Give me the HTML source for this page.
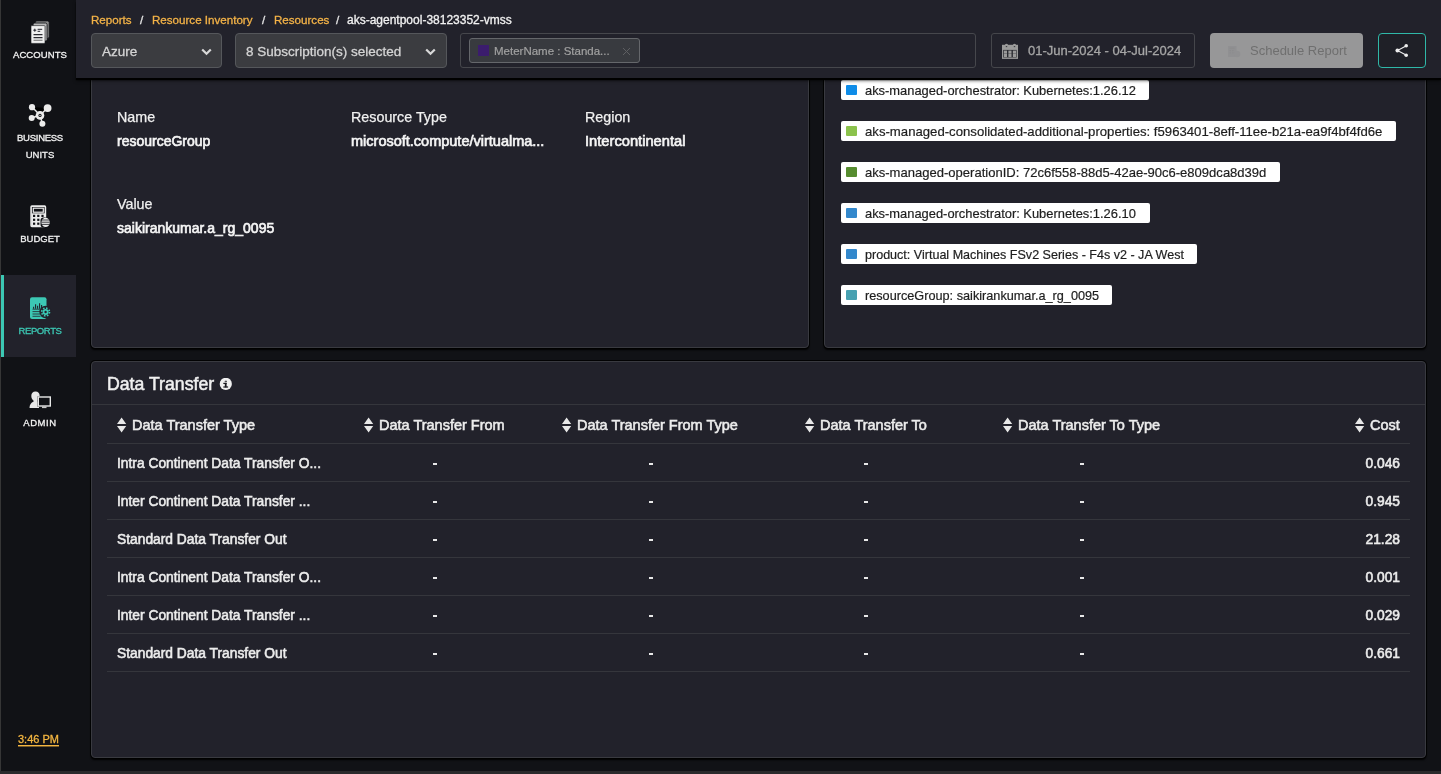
<!DOCTYPE html>
<html><head><meta charset="utf-8">
<style>
*{box-sizing:border-box;margin:0;padding:0}
html,body{width:1441px;height:774px;overflow:hidden;background:#111216;font-family:"Liberation Sans",sans-serif;color:#f0f0f0}
.abs{position:absolute}
#lb{left:0;top:0;width:1px;height:774px;background:#363636}
#bb{left:0;top:771px;width:1441px;height:3px;background:#2a2a2c}
#side{left:1px;top:0;width:75px;height:771px;background:#111216}
.nav{position:absolute;left:2px;width:76px;text-align:center;font-size:9.5px;-webkit-text-stroke:0.3px;color:#f2f2f2;line-height:1}
.card{position:absolute;background:#22222b;border:1px solid #393a40;border-radius:4px;box-shadow:0 0 0 1px rgba(0,0,0,.85),0 2px 2px #000}
#hdr{left:76px;top:0;width:1365px;height:78px;background:#22222b;box-shadow:0 2px 1px #000,0 3px 3px rgba(0,0,0,.5)}
.bc{position:absolute;top:13px;font-size:11.6px;-webkit-text-stroke:0.3px;line-height:14px;color:#f4b347;white-space:nowrap}
.dd{position:absolute;top:33px;height:35px;background:#3b3c40;border:1px solid #55575b;border-radius:4px;color:#d4d4d4;font-size:13.5px;-webkit-text-stroke:0.3px}
.lbl{position:absolute;font-size:14.3px;-webkit-text-stroke:0.25px;color:#f0f0f0;white-space:nowrap;line-height:16px}
.val{position:absolute;font-size:14px;-webkit-text-stroke:0.65px;color:#f5f5f5;white-space:nowrap;line-height:16px}
.tag{position:absolute;left:841px;height:20px;background:#fff;border-radius:2px;color:#1e1e1e;font-size:12.85px;-webkit-text-stroke:0.2px;line-height:22px;white-space:nowrap;padding-left:24px}
.tag i{position:absolute;left:5px;top:5px;width:11px;height:10px;border-radius:1px}
.th{position:absolute;top:416px;font-size:14.5px;-webkit-text-stroke:0.55px;color:#ececec;white-space:nowrap;line-height:18px}
.td{position:absolute;font-size:13.8px;-webkit-text-stroke:0.55px;color:#ececec;white-space:nowrap;line-height:16px}
.dash{position:absolute;width:4px;height:2px;background:#e8e8e8}
.hl{position:absolute;left:107px;width:1303px;height:1px;background:#35363c}
</style></head><body><div id="root" style="position:absolute;left:0;top:0;width:1441px;height:774px;will-change:transform">
<div id="lb" class="abs"></div>
<div id="side" class="abs"></div>
<!-- accounts -->
<svg class="abs" style="left:30px;top:20px" width="21" height="25" viewBox="0 0 21 25">
<rect x="5.2" y="0.9" width="14" height="17.5" rx="1.6" fill="#8f8f8f" stroke="#111216" stroke-width="0.9"/>
<rect x="3.1" y="3" width="14" height="18" rx="1.6" fill="#b9b9b9" stroke="#111216" stroke-width="0.9"/>
<rect x="1" y="5.6" width="14" height="17.8" rx="0.8" fill="#f0f0f0" stroke="#111216" stroke-width="0.6"/>
<path d="M3.3 10.2 h3 M4.8 8.7 v3" stroke="#22222b" stroke-width="1"/>
<path d="M7.6 9.3 h4.6 M7.6 11.3 h2.6" stroke="#22222b" stroke-width="1"/>
<path d="M3.5 14.6 h9 M3.5 17.6 h9" stroke="#2a2a30" stroke-width="1.1"/>
<path d="M3.5 20.3 h9" stroke="#8a8a8a" stroke-width="1.3"/>
</svg>
<div class="nav" style="top:50px;letter-spacing:0.09px">ACCOUNTS</div>
<!-- business units -->
<svg class="abs" style="left:26px;top:101px" width="28" height="28" viewBox="0 0 28 28">
<path d="M6 6 L14 14 L21.6 7 M14 14 L5.7 17 M14 14 L16.4 22.8" stroke="#ececec" stroke-width="1.4"/>
<circle cx="14" cy="14.4" r="4.3" fill="#ececec"/><circle cx="14" cy="14.4" r="1.6" fill="#111216"/><circle cx="14" cy="14.4" r="0.7" fill="#ececec"/>
<circle cx="6" cy="6.2" r="3.1" fill="#ececec"/><circle cx="21.6" cy="7.1" r="3.9" fill="#ececec"/>
<circle cx="5.7" cy="17" r="3" fill="#ececec"/><circle cx="16.4" cy="22.8" r="3" fill="#ececec"/>
</svg>
<div class="nav" style="top:133px;letter-spacing:-0.27px">BUSINESS</div>
<div class="nav" style="top:150px;letter-spacing:0px">UNITS</div>
<!-- budget -->
<svg class="abs" style="left:30px;top:205px" width="21" height="23" viewBox="0 0 21 23">
<rect x="1.1" y="1.1" width="14.3" height="20.3" rx="0.8" fill="none" stroke="#ececec" stroke-width="1.6"/>
<rect x="3.3" y="3.2" width="10" height="4" fill="none" stroke="#ececec" stroke-width="1.2"/>
<rect x="1.5" y="8.3" width="13.5" height="13" fill="#ececec"/>
<g fill="#111216"><rect x="3" y="9.8" width="2.2" height="2.2"/><rect x="7.2" y="9.8" width="2.2" height="2.2"/><rect x="11.4" y="9.8" width="2.2" height="2.2"/>
<rect x="3" y="13.7" width="2.2" height="2.2"/><rect x="7.2" y="13.7" width="2.2" height="2.2"/>
<rect x="3" y="17.6" width="2.2" height="2.2"/><rect x="7.2" y="17.6" width="2.2" height="2.2"/></g>
<rect x="10.5" y="12.5" width="10" height="10" rx="3" fill="#111216"/>
<ellipse cx="15.6" cy="17.4" rx="4.2" ry="4.6" fill="#ececec"/>
<path d="M11.4 15 h8.4 M11.4 17.2 h8.4 M11.4 19.4 h8.4" stroke="#111216" stroke-width="0.8"/>
</svg>
<div class="nav" style="top:234px;letter-spacing:0px">BUDGET</div>
<!-- reports active -->
<div class="abs" style="left:1px;top:275px;width:75px;height:82px;background:#22222b"></div>
<div class="abs" style="left:1px;top:275px;width:3px;height:82px;background:#3cc8b4"></div>
<svg class="abs" style="left:29px;top:296px" width="23" height="24" viewBox="0 0 23 24">
<rect x="1" y="1.2" width="16.5" height="21.8" rx="2" fill="#3cc8b4"/>
<path d="M3.5 13.2 h11" stroke="#22222b" stroke-width="0.8"/>
<path d="M4.6 12.8 v-2 M6.6 12.8 v-4.5 M8.6 12.8 v-3 M10.6 12.8 v-5.5 M12.6 12.8 v-3.8" stroke="#22222b" stroke-width="1.1"/>
<path d="M3.5 15.6 h9 M3.5 18 h8 M3.5 20.3 h8" stroke="#22222b" stroke-width="0.8"/>
<circle cx="16.6" cy="16" r="6.2" fill="#22222b"/>
<circle cx="16.6" cy="16" r="3.9" fill="none" stroke="#3cc8b4" stroke-width="1.6" stroke-dasharray="1.55 1.51"/>
<circle cx="16.6" cy="16" r="2.1" fill="none" stroke="#3cc8b4" stroke-width="1.8"/>
</svg>
<div class="nav" style="top:326px;color:#3cc8b4;-webkit-text-stroke-color:#3cc8b4;letter-spacing:-0.38px">REPORTS</div>
<!-- admin -->
<svg class="abs" style="left:28px;top:390px" width="24" height="20" viewBox="0 0 24 20">
<path d="M7.5 1.5 c2.6 0 4.2 1.8 4.2 4.4 c0 2.2-1 3.8-2.2 4.6 v1 h1.5 v6.6 h-9.5 c0-3.6 1.7-5.5 4-6.4 v-1.2 c-1.2-0.8-2.2-2.4-2.2-4.6 c0-2.6 1.6-4.4 4.2-4.4 z" fill="#e8e8e8"/>
<rect x="9.5" y="6.3" width="13.5" height="10.5" fill="#111216"/>
<rect x="10.3" y="7" width="12" height="9" fill="none" stroke="#e8e8e8" stroke-width="1.4"/>
<rect x="14" y="16.3" width="4.5" height="1.8" fill="#c8c8c8"/>
</svg>
<div class="nav" style="top:418px;letter-spacing:0.54px">ADMIN</div>
<div class="abs" style="left:18px;top:733px;font-size:11px;line-height:12px;color:#f4b640;white-space:nowrap;-webkit-text-stroke:0.3px">3:46 PM</div>
<div class="abs" style="left:18px;top:745px;width:41px;height:1px;background:#f4b640"></div><div class="abs" style="left:18px;top:746px;width:41px;height:1px;background:rgba(244,182,64,.45)"></div>

<!-- cards -->
<div class="card" style="left:91px;top:40px;width:718px;height:308px"></div>
<div class="card" style="left:824px;top:40px;width:602px;height:308px"></div>
<div class="card" style="left:91px;top:361px;width:1335px;height:397px"></div>

<!-- left card content -->
<div class="lbl" style="left:117px;top:109px">Name</div>
<div class="val" style="left:117px;top:133px">resourceGroup</div>
<div class="lbl" style="left:351px;top:109px">Resource Type</div>
<div class="val" style="left:351px;top:133px;font-size:14.5px">microsoft.compute/virtualma...</div>
<div class="lbl" style="left:585px;top:109px">Region</div>
<div class="val" style="left:585px;top:133px;font-size:14.7px">Intercontinental</div>
<div class="lbl" style="left:117px;top:196px">Value</div>
<div class="val" style="left:117px;top:220px">saikirankumar.a_rg_0095</div>

<!-- tags -->
<div class="tag" style="top:80px;width:308px;font-size:12.9px"><i style="background:#0e8ce8"></i>aks-managed-orchestrator: Kubernetes:1.26.12</div>
<div class="tag" style="top:121px;width:555px;font-size:13.17px"><i style="background:#8bc24c"></i>aks-managed-consolidated-additional-properties: f5963401-8eff-11ee-b21a-ea9f4bf4fd6e</div>
<div class="tag" style="top:162px;width:439px;font-size:13.04px"><i style="background:#568c2f"></i>aks-managed-operationID: 72c6f558-88d5-42ae-90c6-e809dca8d39d</div>
<div class="tag" style="top:203px;width:309px;font-size:12.9px"><i style="background:#3388cc"></i>aks-managed-orchestrator: Kubernetes:1.26.10</div>
<div class="tag" style="top:244px;width:356px;font-size:12.55px"><i style="background:#3388cc"></i>product: Virtual Machines FSv2 Series - F4s v2 - JA West</div>
<div class="tag" style="top:285px;width:271px;font-size:12.69px"><i style="background:#47a1b1"></i>resourceGroup: saikirankumar.a_rg_0095</div>

<!-- data transfer -->
<div class="abs" style="left:107px;top:374px;font-size:17.7px;-webkit-text-stroke:0.5px;line-height:20px;color:#f0f0f0;white-space:nowrap">Data Transfer</div>
<svg class="abs" style="left:219px;top:378px" width="14" height="13" viewBox="0 0 14 13"><circle cx="6.8" cy="5.9" r="6.1" fill="#f0f0f0"/><g fill="#1a1a20"><rect x="5.6" y="2.7" width="2.4" height="1.1" rx="0.5"/><rect x="4.3" y="4.8" width="3.3" height="1.2"/><rect x="5.8" y="4.8" width="1.8" height="4.6"/><rect x="4.3" y="8.4" width="4.8" height="1.2"/></g></svg>
<div class="abs" style="left:92px;top:404px;width:1333px;height:1px;background:#35363c"></div>
<div class="hl" style="top:443px"></div>
<div class="hl" style="top:481px"></div>
<div class="hl" style="top:519px"></div>
<div class="hl" style="top:557px"></div>
<div class="hl" style="top:595px"></div>
<div class="hl" style="top:633px"></div>
<div class="hl" style="top:671px"></div>

<!-- table -->
<svg class="abs" style="left:117px;top:417px" width="10" height="16" viewBox="0 0 10 16"><path d="M0 7 L4.6 0.5 L9.2 7 Z M0 9 L4.6 15.5 L9.2 9 Z" fill="#e8e8e8"/></svg>
<div class="th" style="left:132px">Data Transfer Type</div>
<svg class="abs" style="left:364px;top:417px" width="10" height="16" viewBox="0 0 10 16"><path d="M0 7 L4.6 0.5 L9.2 7 Z M0 9 L4.6 15.5 L9.2 9 Z" fill="#e8e8e8"/></svg>
<div class="th" style="left:379px">Data Transfer From</div>
<svg class="abs" style="left:562px;top:417px" width="10" height="16" viewBox="0 0 10 16"><path d="M0 7 L4.6 0.5 L9.2 7 Z M0 9 L4.6 15.5 L9.2 9 Z" fill="#e8e8e8"/></svg>
<div class="th" style="left:577px">Data Transfer From Type</div>
<svg class="abs" style="left:805px;top:417px" width="10" height="16" viewBox="0 0 10 16"><path d="M0 7 L4.6 0.5 L9.2 7 Z M0 9 L4.6 15.5 L9.2 9 Z" fill="#e8e8e8"/></svg>
<div class="th" style="left:820px">Data Transfer To</div>
<svg class="abs" style="left:1003px;top:417px" width="10" height="16" viewBox="0 0 10 16"><path d="M0 7 L4.6 0.5 L9.2 7 Z M0 9 L4.6 15.5 L9.2 9 Z" fill="#e8e8e8"/></svg>
<div class="th" style="left:1018px">Data Transfer To Type</div>
<svg class="abs" style="left:1355px;top:417px" width="10" height="16" viewBox="0 0 10 16"><path d="M0 7 L4.6 0.5 L9.2 7 Z M0 9 L4.6 15.5 L9.2 9 Z" fill="#e8e8e8"/></svg>
<div class="th" style="left:1370px">Cost</div>
<div class="td" style="left:117px;top:456px">Intra Continent Data Transfer O...</div>
<div class="dash" style="left:433px;top:463px"></div>
<div class="dash" style="left:649px;top:463px"></div>
<div class="dash" style="left:864px;top:463px"></div>
<div class="dash" style="left:1080px;top:463px"></div>
<div class="td" style="right:41px;top:456px">0.046</div>
<div class="td" style="left:117px;top:494px">Inter Continent Data Transfer ...</div>
<div class="dash" style="left:433px;top:501px"></div>
<div class="dash" style="left:649px;top:501px"></div>
<div class="dash" style="left:864px;top:501px"></div>
<div class="dash" style="left:1080px;top:501px"></div>
<div class="td" style="right:41px;top:494px">0.945</div>
<div class="td" style="left:117px;top:532px">Standard Data Transfer Out</div>
<div class="dash" style="left:433px;top:539px"></div>
<div class="dash" style="left:649px;top:539px"></div>
<div class="dash" style="left:864px;top:539px"></div>
<div class="dash" style="left:1080px;top:539px"></div>
<div class="td" style="right:41px;top:532px">21.28</div>
<div class="td" style="left:117px;top:570px">Intra Continent Data Transfer O...</div>
<div class="dash" style="left:433px;top:577px"></div>
<div class="dash" style="left:649px;top:577px"></div>
<div class="dash" style="left:864px;top:577px"></div>
<div class="dash" style="left:1080px;top:577px"></div>
<div class="td" style="right:41px;top:570px">0.001</div>
<div class="td" style="left:117px;top:608px">Inter Continent Data Transfer ...</div>
<div class="dash" style="left:433px;top:615px"></div>
<div class="dash" style="left:649px;top:615px"></div>
<div class="dash" style="left:864px;top:615px"></div>
<div class="dash" style="left:1080px;top:615px"></div>
<div class="td" style="right:41px;top:608px">0.029</div>
<div class="td" style="left:117px;top:646px">Standard Data Transfer Out</div>
<div class="dash" style="left:433px;top:653px"></div>
<div class="dash" style="left:649px;top:653px"></div>
<div class="dash" style="left:864px;top:653px"></div>
<div class="dash" style="left:1080px;top:653px"></div>
<div class="td" style="right:41px;top:646px">0.661</div>

<!-- header -->
<div id="hdr" class="abs"></div>
<div class="bc" style="left:91px">Reports</div>
<div class="bc" style="left:140px;color:#e6e6e6">/</div>
<div class="bc" style="left:152px">Resource Inventory</div>
<div class="bc" style="left:262px;color:#e6e6e6">/</div>
<div class="bc" style="left:274px">Resources</div>
<div class="bc" style="left:336px;color:#e6e6e6">/</div>
<div class="bc" style="left:347px;color:#f2f2f2;font-size:12px">aks-agentpool-38123352-vmss</div>

<div class="dd" style="left:91px;width:131px"><span class="abs" style="left:10px;top:9px;line-height:17px">Azure</span>
<svg class="abs" style="left:109px;top:14px" width="11" height="8" viewBox="0 0 11 8"><path d="M1.2 1.5 L5.5 5.8 L9.8 1.5" fill="none" stroke="#d8d8d8" stroke-width="2.2"/></svg></div>
<div class="dd" style="left:235px;width:212px"><span class="abs" style="left:10px;top:9px;line-height:17px">8 Subscription(s) selected</span>
<svg class="abs" style="left:189px;top:14px" width="11" height="8" viewBox="0 0 11 8"><path d="M1.2 1.5 L5.5 5.8 L9.8 1.5" fill="none" stroke="#d8d8d8" stroke-width="2.2"/></svg></div>

<div class="abs" style="left:460px;top:33px;width:516px;height:35px;border:1px solid #46474c;border-radius:3px"></div>
<div class="abs" style="left:469px;top:38px;width:171px;height:25px;border:1px solid #65676b;border-radius:3px;background:#383a3f"></div>
<div class="abs" style="left:478px;top:45px;width:11px;height:11px;background:#3b1c6d"></div>
<div class="abs" style="left:494px;top:44px;font-size:11.5px;line-height:14px;color:#a0a0a0;-webkit-text-stroke:0.2px;white-space:nowrap">MeterName : Standa...</div>
<svg class="abs" style="left:622px;top:47px" width="9" height="9" viewBox="0 0 9 9"><path d="M1 1 L8 8 M8 1 L1 8" stroke="#5e5f62" stroke-width="1"/></svg>

<div class="abs" style="left:991px;top:33px;width:204px;height:35px;border:1px solid #45464b;border-radius:3px"></div>
<svg class="abs" style="left:1001px;top:43px" width="18" height="17" viewBox="0 0 18 17">
<rect x="1" y="1.8" width="16" height="14.1" fill="#9a9a9a"/>
<rect x="2.2" y="6.9" width="13.4" height="7.6" fill="#2a2b31"/>
<g fill="#9a9a9a"><rect x="2.9" y="7.6" width="3.1" height="3.1"/><rect x="7.4" y="7.6" width="3.1" height="3.1"/><rect x="11.9" y="7.6" width="3.1" height="3.1"/>
<rect x="2.9" y="11" width="3.1" height="3.1"/><rect x="7.4" y="11" width="3.1" height="3.1"/><rect x="11.9" y="11" width="3.1" height="3.1"/></g>
<circle cx="5.5" cy="2.5" r="1.7" fill="#9a9a9a"/><circle cx="13.5" cy="2.5" r="1.7" fill="#9a9a9a"/>
<rect x="4.8" y="3.2" width="1.4" height="0.9" fill="#2a2b31"/><rect x="12.8" y="3.2" width="1.4" height="0.9" fill="#2a2b31"/>
</svg>
<div class="abs" style="left:1028px;top:43px;font-size:13px;line-height:16px;color:#a6a6a6;-webkit-text-stroke:0.3px;white-space:nowrap">01-Jun-2024 - 04-Jul-2024</div>

<div class="abs" style="left:1210px;top:33px;width:153px;height:35px;background:#979798;border-radius:4px"></div>
<svg class="abs" style="left:1227px;top:45px" width="14" height="13" viewBox="0 0 14 13"><rect x="1" y="1" width="8.5" height="11" fill="#909092"/><path d="M2.5 3.2 h5 M2.5 5.6 h1.5 M5 5.6 h1.5 M2.5 8 h1.5 M5 8 h1.5" stroke="#8b8b8d" stroke-width="1"/><circle cx="10" cy="9" r="3.3" fill="#909092"/></svg>
<div class="abs" style="left:1250px;top:43px;font-size:13px;line-height:16px;color:#6f6f6f;white-space:nowrap">Schedule Report</div>

<div class="abs" style="left:1378px;top:33px;width:48px;height:35px;border:1px solid #2fb8a8;border-radius:4px;background:#1f2027"></div>
<svg class="abs" style="left:1394px;top:42px" width="16" height="17" viewBox="0 0 16 17">
<path d="M3.5 8.5 L12 3.9 M3.5 8.5 L12 13.1" stroke="#ededed" stroke-width="1.1"/>
<circle cx="3.4" cy="8.5" r="1.95" fill="#ededed"/><circle cx="12.2" cy="3.7" r="1.8" fill="#ededed"/><circle cx="12.2" cy="13.3" r="1.8" fill="#ededed"/>
</svg>

<div id="bb" class="abs"></div>
</div></body></html>
